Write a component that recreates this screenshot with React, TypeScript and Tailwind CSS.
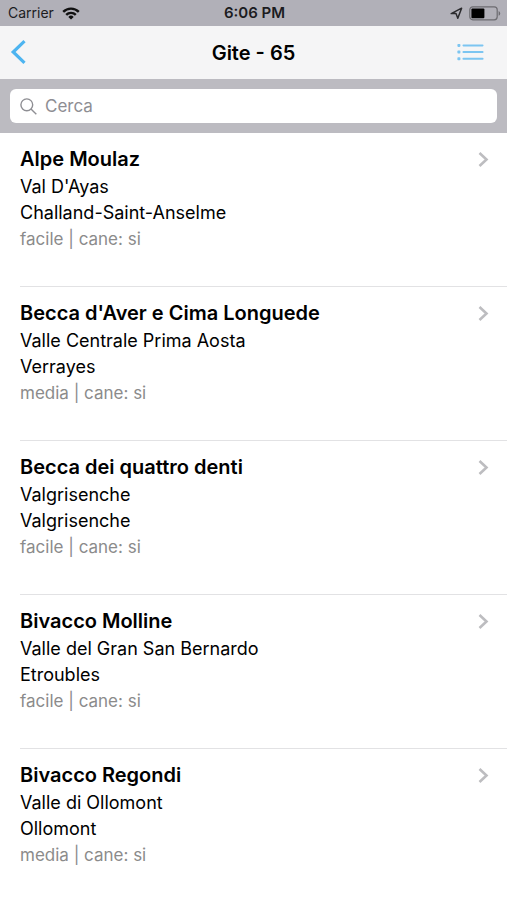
type Trip = { name: string; valley: string; town: string; level: string };

const trips: Trip[] = [
  { name: "Alpe Moulaz", valley: "Val D'Ayas", town: "Challand-Saint-Anselme", level: "facile" },
  { name: "Becca d'Aver e Cima Longuede", valley: "Valle Centrale Prima Aosta", town: "Verrayes", level: "media" },
  { name: "Becca dei quattro denti", valley: "Valgrisenche", town: "Valgrisenche", level: "facile" },
  { name: "Bivacco Molline", valley: "Valle del Gran San Bernardo", town: "Etroubles", level: "facile" },
  { name: "Bivacco Regondi", valley: "Valle di Ollomont", town: "Ollomont", level: "media" },
];

function WifiIcon() {
  return (
    <svg width="18" height="13" viewBox="0 0 18 13" fill="none" stroke="#111" strokeWidth="2.4" aria-hidden="true">
      <path d="M1.2 4.9a11 11 0 0 1 15.6 0" />
      <path d="M4.2 7.9a6.8 6.8 0 0 1 9.6 0" />
      <path d="M9 12.6 6.3 9.9a3.8 3.8 0 0 1 5.4 0z" fill="#111" stroke="none" />
    </svg>
  );
}

function LocationIcon() {
  return (
    <svg width="13" height="13" viewBox="0 0 13 13" fill="none" stroke="#2b2b2e" strokeWidth="1.5" strokeLinejoin="round" aria-hidden="true">
      <path d="M11.6 1.2 1.2 6.6l4.8-.2 1.8 4.8z" />
    </svg>
  );
}

function BatteryIcon() {
  return (
    <svg width="32" height="15" viewBox="0 0 32 15" aria-hidden="true">
      <rect x="0.8" y="0.8" width="27.4" height="13" rx="3" fill="none" stroke="#6c6b70" strokeWidth="1.2" />
      <rect x="2.4" y="2.4" width="13" height="9.8" rx="1" fill="#000" />
      <path d="M29.6 5v4.8q1.6-.8 1.6-2.4t-1.6-2.4z" fill="#6c6b70" />
    </svg>
  );
}

export default function App() {
  return (
    <div className="min-h-screen bg-white font-[Inter,'Liberation_Sans',sans-serif] text-black">
      <div className="grid h-[26px] grid-cols-3 items-center bg-[#b1b0b8] pl-2 pr-[6px]">
        <div className="flex items-center gap-2 text-sm text-[#1c1c1f]">
          Carrier
          <WifiIcon />
        </div>
        <div className="text-center text-[15px] font-semibold text-[#1c1c1f]">6:06 PM</div>
        <div className="flex items-center justify-end gap-[6px]">
          <LocationIcon />
          <BatteryIcon />
        </div>
      </div>

      <header className="grid h-[53px] grid-cols-[1fr_auto_1fr] items-center bg-[#f5f5f6]">
        <button type="button" aria-label="Indietro" className="justify-self-start pb-px pl-[10px]">
          <svg width="17" height="24" viewBox="0 0 17 24" fill="none" stroke="#4db4f0" strokeWidth="3.2" aria-hidden="true">
            <path d="M14.5 1.2 3.2 12l11.3 10.8" />
          </svg>
        </button>
        <h1 className="text-xl font-semibold">Gite - 65</h1>
        <button type="button" aria-label="Elenco" className="justify-self-end pr-[22px] pb-px">
          <svg width="28" height="18" viewBox="0 0 28 18" fill="#7cc5f1" aria-hidden="true">
            <rect x="0.4" y="0.9" width="3" height="3" rx="0.8" />
            <rect x="0.4" y="7.6" width="3" height="3" rx="0.8" />
            <rect x="0.4" y="14.3" width="3" height="3" rx="0.8" />
            <rect x="5.5" y="1.4" width="21" height="2" rx="0.8" />
            <rect x="5.5" y="8.1" width="21" height="2" rx="0.8" />
            <rect x="5.5" y="14.8" width="21" height="2" rx="0.8" />
          </svg>
        </button>
      </header>

      <div className="bg-[#bcbbc1] px-[10px] py-[10px]">
        <label className="flex h-[34px] items-center gap-2 rounded-md bg-white px-[10px]">
          <svg width="17" height="17" viewBox="0 0 17 17" fill="none" stroke="#8e8e93" strokeWidth="1.4" aria-hidden="true">
            <circle cx="6.8" cy="6.8" r="5.9" />
            <path d="m11 11 5.3 5.3" />
          </svg>
          <input
            type="search"
            aria-label="Cerca"
            placeholder="Cerca"
            className="min-w-0 flex-1 bg-transparent text-[17px] leading-6 outline-none placeholder:text-[#8e8e93]"
          />
        </label>
      </div>

      <ul className="pl-5">
        {trips.map((trip) => (
          <li key={trip.name} className="border-b border-[#e2e2e4] last:border-0">
            <a href="#" className="flex justify-between pt-3 pr-[18px] pb-[34px]">
              <div className="text-lg leading-[26px]">
                <h2 className="text-xl leading-[29px] font-semibold">{trip.name}</h2>
                <p>{trip.valley}</p>
                <p>{trip.town}</p>
                <p className="text-[17px] text-[#8b8b8b]">{trip.level} | cane: si</p>
              </div>
              <svg className="mt-[7px]" width="11" height="15" viewBox="0 0 11 15" fill="none" stroke="#bdbdc0" strokeWidth="2.6" aria-hidden="true">
                <path d="m1.5 1 7 6.5-7 6.5" />
              </svg>
            </a>
          </li>
        ))}
      </ul>
    </div>
  );
}
